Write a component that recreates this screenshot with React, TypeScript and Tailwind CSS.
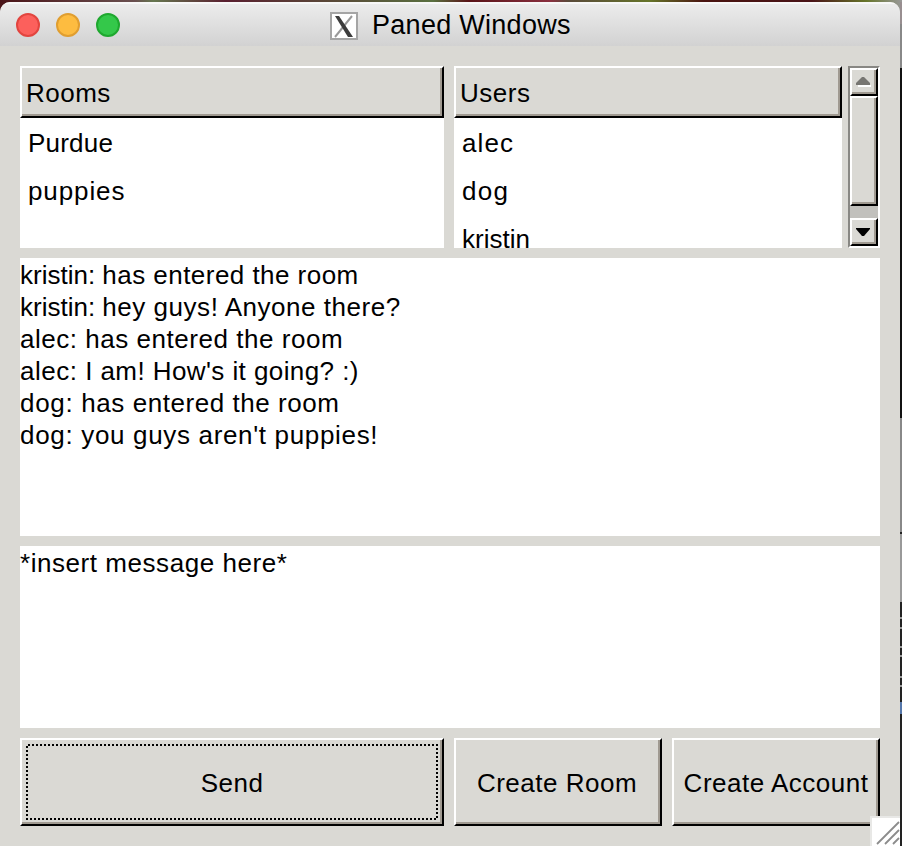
import React from "react";

const bevel =
  "border-2 border-t-white border-l-white border-r-black border-b-black shadow-[inset_-2px_-2px_0_#a09a91] bg-[#dad9d4]";

type Item = { name: string; tracking: string };

function Column({ title, items, className }: { title: string; items: Item[]; className: string }) {
  return (
    <section className={`h-full overflow-hidden bg-white ${className}`}>
      <div className={`h-[52px] pl-1 leading-[50px] ${bevel}`}>
        <span className="tracking-[0.5px]">{title}</span>
      </div>
      <ul className="pl-2">
        {items.map(({ name, tracking }) => (
          <li key={name} className={`h-12 leading-[50px] ${tracking}`}>{name}</li>
        ))}
      </ul>
    </section>
  );
}

const rooms: Item[] = [
  { name: "Purdue", tracking: "tracking-[0.2px]" },
  { name: "puppies", tracking: "tracking-[0.9px]" },
];

const users: Item[] = [
  { name: "alec", tracking: "tracking-[1.1px]" },
  { name: "dog", tracking: "tracking-[1.3px]" },
  { name: "kristin", tracking: "tracking-[0px]" },
];

const log = [
  { from: "kristin: ", text: "has entered the room", a: "tracking-[0px]", b: "tracking-[0.46px]" },
  { from: "kristin: ", text: "hey guys! Anyone there?", a: "tracking-[0px]", b: "tracking-[0.53px]" },
  { from: "alec: ", text: "has entered the room", a: "tracking-[0.5px]", b: "tracking-[0.55px]" },
  { from: "alec: ", text: "I am! How's it going? :)", a: "tracking-[0.5px]", b: "tracking-[0.42px]" },
  { from: "dog: ", text: "has entered the room", a: "tracking-[0.7px]", b: "tracking-[0.55px]" },
  { from: "dog: ", text: "you guys aren't puppies!", a: "tracking-[0.7px]", b: "tracking-[0.66px]" },
];

function ScrollBar() {
  return (
    <div className="ml-1.5 flex h-full w-8 flex-col border-2 border-t-[#888783] border-l-[#888783] border-r-white border-b-white bg-[#c1c0bc]">
      <div className={`flex h-7 items-center justify-center ${bevel}`}>
        <svg className="-ml-0.5" width="16" height="12" viewBox="0 0 16 12">
          <path d="M3 9h13v2H3z" fill="#fff" />
          <path d="M7 1h2l6 6v2H1V7z" fill="#777672" />
        </svg>
      </div>
      <div className={`h-[110px] ${bevel}`} />
      <div className={`mt-auto flex h-7 items-center justify-center ${bevel}`}>
        <svg className="-ml-0.5" width="16" height="12" viewBox="0 0 16 12">
          <path d="M1 2h14v1L9 10H7L1 3z" fill="#000" />
        </svg>
      </div>
    </div>
  );
}

export default function App() {
  return (
    <div className="h-[846px] w-[902px] overflow-hidden bg-[linear-gradient(90deg,#4a1418,#6a5050_15%,#667750_17%,#5a2030_25%,#5a7040_48%,#5a1418_52%,#8a3040_61%,#5a4a3a_63%,#66752a_72%,#4a1410_78%,#4a1418_90%,#66752a_96%,#999)] font-['Liberation_Sans',Arial,sans-serif] text-[26px] text-black">
      <div className="flex h-full pt-0.5">
        <div className="relative flex w-[900px] flex-col overflow-hidden rounded-t-[10px] bg-[#dad9d4]">
          <header className="flex h-11 shrink-0 items-center border-t-2 border-[#f8f8f8] bg-linear-to-b from-[#ececec] to-[#d2d2d2] pl-4">
            <div className="flex gap-4">
              <i className="size-6 rounded-full border-2 border-[#e2453f] bg-[#fc605c]" />
              <i className="size-6 rounded-full border-2 border-[#e09e30] bg-[#fdbc40]" />
              <i className="size-6 rounded-full border-2 border-[#1fa82f] bg-[#34c84a]" />
            </div>
            <svg className="mt-0.5 ml-[210px]" width="28" height="28" viewBox="0 0 28 28">
              <rect x="1" y="1" width="26" height="26" fill="#fff" stroke="#a5a5a5" strokeWidth="2" />
              <path d="M22 4L5 25" stroke="#999" strokeWidth="2" />
              <path d="M5 4h4l14 21h-5z" fill="#3c3c3c" />
            </svg>
            <h1 className="ml-3.5 text-[27px] leading-10 tracking-[0.28px]">Paned Windows</h1>
          </header>
          <main className="flex flex-1 flex-col px-5 pt-5">
            <div className="flex h-[182px]">
              <Column title="Rooms" items={rooms} className="w-[424px]" />
              <Column title="Users" items={users} className="ml-2.5 w-[388px]" />
              <ScrollBar />
            </div>
            <div className="mt-2.5 h-[278px] bg-white pt-px">
              {log.map(({ from, text, a, b }) => (
                <p key={from + text} className="h-8 leading-8 whitespace-pre">
                  <span className={a}>{from}</span>
                  <span className={b}>{text}</span>
                </p>
              ))}
            </div>
            <div className="mt-2.5 h-[182px] bg-white pt-px">
              <p className="leading-8 tracking-[0.55px]">*insert message here*</p>
            </div>
            <div className="mt-2.5 flex h-[88px] gap-2.5">
              <button className={`w-[424px] p-1 ${bevel}`}>
                <span className="flex h-full items-center justify-center bg-[repeating-linear-gradient(90deg,transparent_0_2px,#000_2px_4px),repeating-linear-gradient(90deg,#000_0_2px,transparent_2px_4px),repeating-linear-gradient(180deg,transparent_0_2px,#000_2px_4px),repeating-linear-gradient(180deg,#000_0_2px,transparent_2px_4px)] bg-[length:100%_2px,100%_2px,2px_100%,2px_100%] bg-[position:0_0,0_100%,0_0,100%_0] bg-no-repeat pt-0.5 tracking-[0.5px]">Send</span>
              </button>
              <button className={`w-52 pt-0.5 pr-0.5 tracking-[0.5px] ${bevel}`}>Create Room</button>
              <button className={`w-52 pt-0.5 whitespace-nowrap tracking-[0.5px] ${bevel}`}>Create Account</button>
            </div>
          </main>
          <svg className="absolute right-0 bottom-0" width="30" height="30" viewBox="0 0 30 30">
            <path d="M2 2h28v28H2z" fill="#fff" />
            <path d="M1 30V1h29" fill="none" stroke="#e8e8e6" strokeWidth="2" />
            <path d="M7 28L29 6M15 28L29 14M23 28L29 22" stroke="#8c8c8c" strokeWidth="1.8" />
          </svg>
        </div>
        <div className="w-0.5 bg-[linear-gradient(180deg,#988e90_0_22px,#888_22px_66px,#111_66px_416px,#888_416px_530px,#222_530px_532px,#999_532px_600px,#222_600px_615px,#999_615px_617px,#222_617px_625px,#999_625px_627px,#222_627px_644px,#999_644px_646px,#222_646px_653px,#999_653px_655px,#222_655px_674px,#999_674px_676px,#222_676px_683px,#999_683px_685px,#222_685px_700px,#57a_700px_712px,#222_712px)]" />
      </div>
    </div>
  );
}
